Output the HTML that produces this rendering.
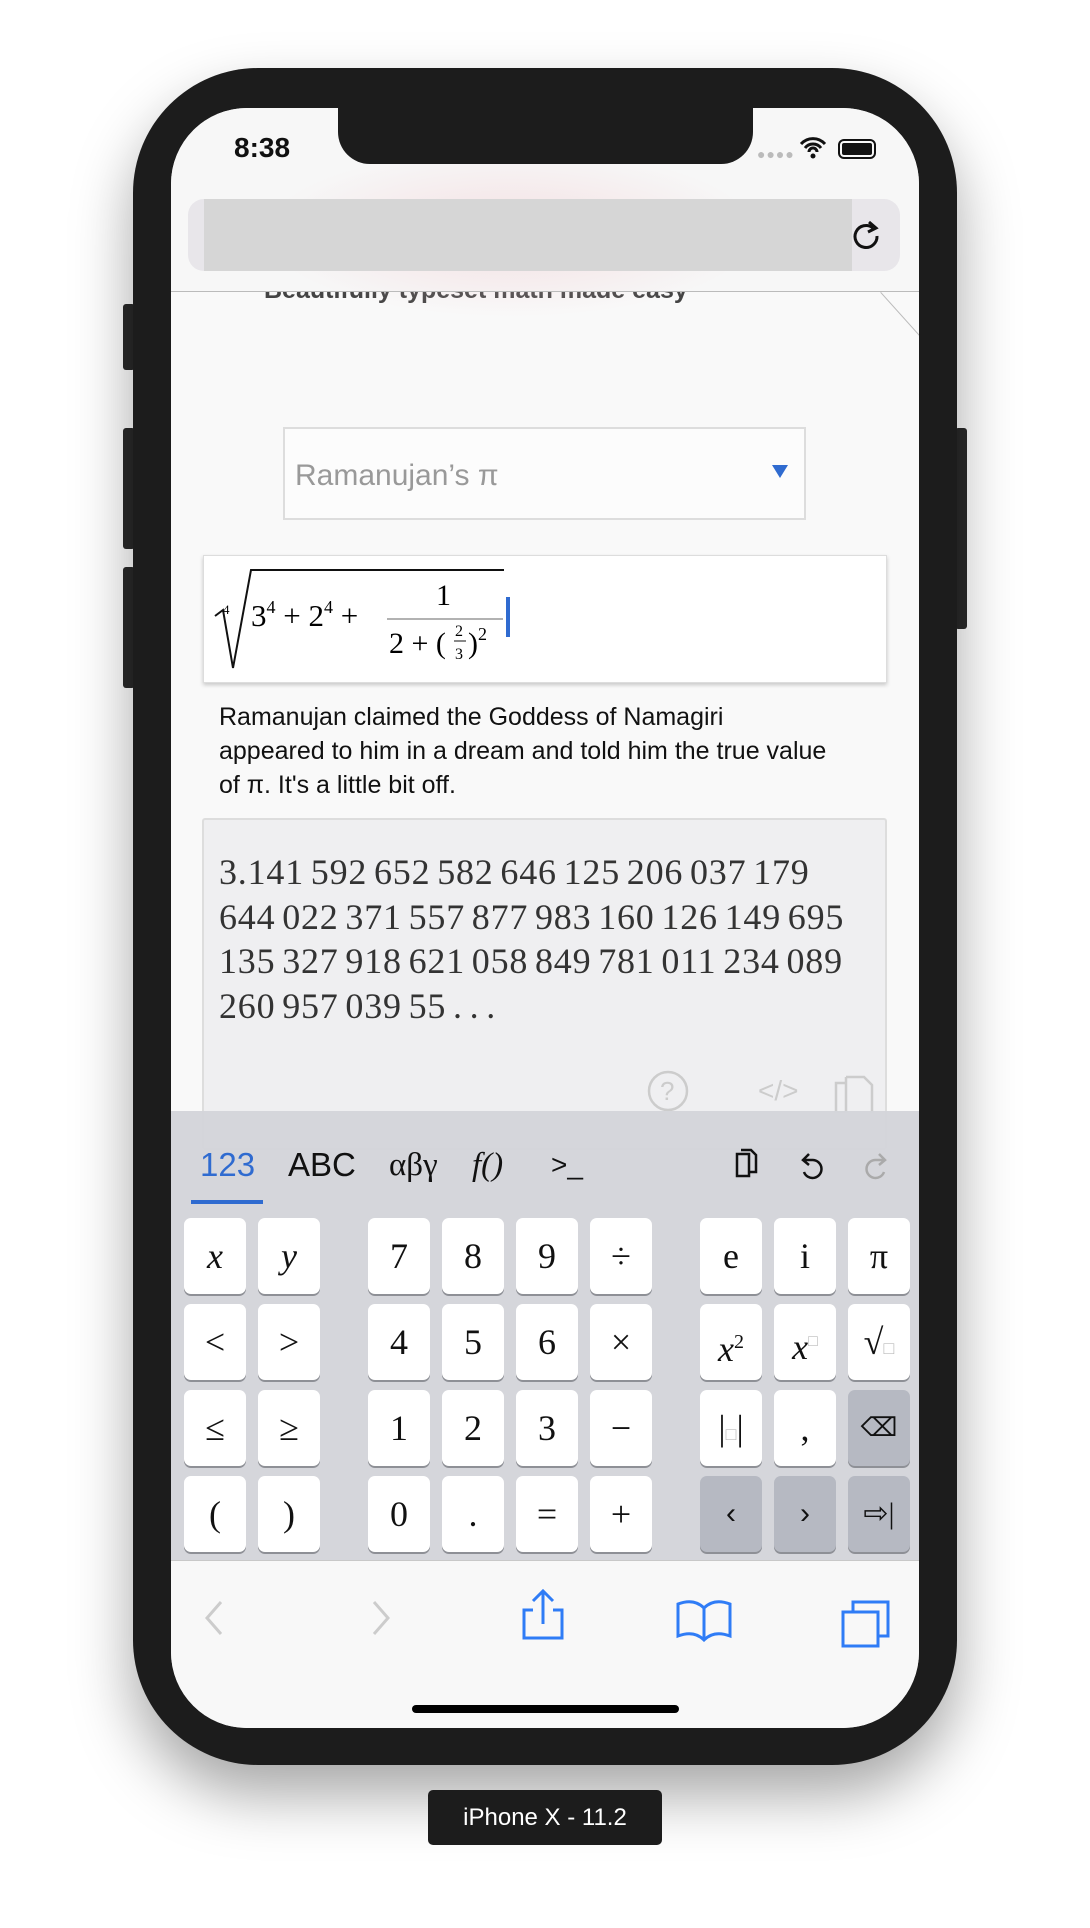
<!DOCTYPE html>
<html><head><meta charset="utf-8"><style>
*{margin:0;padding:0;box-sizing:border-box}
body{width:1090px;height:1928px;background:#fff;position:relative;overflow:hidden;font-family:"Liberation Sans",sans-serif}
.abs{position:absolute}
.phone{left:133px;top:68px;width:824px;height:1697px;background:#1c1c1c;border-radius:125px;box-shadow:0 30px 60px rgba(0,0,0,.35)}
.btn{background:#2a2a2a;border-radius:3px}
.screen{left:171px;top:108px;width:748px;height:1620px;background:#f9f9f9;border-radius:76px;overflow:hidden}
.key{position:absolute;width:62px;height:76px;background:#fff;border-radius:7px;box-shadow:0 2px 0 #8e9096;text-align:center;line-height:76px;font-family:"Liberation Serif",serif;font-size:36px;color:#111}
.dk{background:#b6b9c2}
.tab{position:absolute;top:1037px;font-size:33px;line-height:40px}
</style></head><body>
<div class="abs btn" style="left:123px;top:304px;width:12px;height:66px"></div>
<div class="abs btn" style="left:123px;top:428px;width:12px;height:121px"></div>
<div class="abs btn" style="left:123px;top:567px;width:12px;height:121px"></div>
<div class="abs btn" style="left:955px;top:428px;width:12px;height:201px"></div>
<div class="abs phone"></div>
<div class="abs screen">
 <div class="abs" style="left:93px;top:168px;font-weight:bold;font-size:25px;color:#444;white-space:nowrap">Beautifully typeset math made easy</div>
 <div class="abs" style="left:0;top:0;width:748px;height:184px;background:#f7f7f7"></div>
 <div class="abs" style="left:90px;top:40px;width:500px;height:170px;background:radial-gradient(ellipse at center,rgba(240,200,205,.5),rgba(255,255,255,0) 70%)"></div>
 <div class="abs" style="left:17px;top:91px;width:712px;height:72px;background:#e8e6ea;border-radius:16px"></div>
 <div class="abs" style="left:33px;top:91px;width:648px;height:72px;background:#d6d6d6"></div>
 <svg class="abs" style="left:678px;top:111px" width="34" height="34" viewBox="0 0 34 34"><path d="M24 9 A11 11 0 1 0 28 17" fill="none" stroke="#111" stroke-width="3"/><path d="M20 3 L27 9 L19 13" fill="none" stroke="#111" stroke-width="3"/></svg>
 <div class="abs" style="left:0;top:183px;width:748px;height:1px;background:#bbb"></div>
 <div class="abs" style="left:710px;top:184px;width:60px;height:1px;background:#bbb;transform:rotate(48deg);transform-origin:0 0"></div>
 <div class="abs" style="left:112px;top:319px;width:523px;height:93px;border:2px solid #ddd;background:#fcfcfc"></div>
 <div class="abs" style="left:124px;top:351px;font-size:30px;color:#999">Ramanujan’s π</div>
 <div class="abs" style="left:601px;top:357px;width:0;height:0;border-left:8px solid transparent;border-right:8px solid transparent;border-top:13px solid #2f6bd0"></div>
 <div class="abs" style="left:32px;top:447px;width:684px;height:128px;background:#fff;border:1px solid #ddd;box-shadow:0 2px 4px rgba(0,0,0,.2)"></div>
 <svg class="abs" style="left:0;top:440px" width="360" height="140"><path d="M44 68 L52 62 L62 120 L80 22 L333 22" fill="none" stroke="#111" stroke-width="2"/><text x="52" y="66" font-family="Liberation Serif" font-size="13">4</text><text x="80" y="78" font-family="Liberation Serif" font-size="31">3<tspan font-size="18" dy="-13">4</tspan><tspan dy="13"> + 2</tspan><tspan font-size="18" dy="-13">4</tspan><tspan dy="13"> +</tspan></text><text x="265" y="57" font-family="Liberation Serif" font-size="30">1</text><line x1="216" y1="71" x2="332" y2="71" stroke="#999" stroke-width="1.5"/><text x="218" y="105" font-family="Liberation Serif" font-size="30">2 + (</text><text x="284" y="88" font-family="Liberation Serif" font-size="16">2</text><text x="284" y="111" font-family="Liberation Serif" font-size="16">3</text><line x1="283" y1="93" x2="295" y2="93" stroke="#111"/><text x="297" y="105" font-family="Liberation Serif" font-size="30">)<tspan font-size="18" dy="-13">2</tspan></text></svg>
 <div class="abs" style="left:335px;top:489px;width:4px;height:40px;background:#2f6bd0"></div>
 <div class="abs" style="left:48px;top:592px;width:690px;font-size:25px;line-height:34px;color:#111;white-space:nowrap">Ramanujan claimed the Goddess of Namagiri<br>appeared to him in a dream and told him the true value<br>of π. It's a little bit off.</div>
 <div class="abs" style="left:31px;top:710px;width:685px;height:332px;background:#efeff1;border:2px solid #ddd;border-radius:3px"></div>
 <div class="abs" style="left:48px;top:742px;width:680px;font-family:'Liberation Serif',serif;font-size:36px;line-height:44.5px;color:#333;letter-spacing:0.8px;word-spacing:-3px;white-space:nowrap">3.141 592 652 582 646 125 206 037 179<br>644 022 371 557 877 983 160 126 149 695<br>135 327 918 621 058 849 781 011 234 089<br>260 957 039 55 . . .</div>
 <svg class="abs" style="left:475px;top:961px" width="250" height="44"><circle cx="22" cy="22" r="19" fill="none" stroke="#ccc" stroke-width="2.5"/><text x="14" y="31" font-size="26" fill="#ccc">?</text><text x="112" y="31" font-size="28" fill="#ccc">&lt;/&gt;</text><path d="M200 8 h18 l8 8 v28 M200 8 v36 h-10 v-30 h10" fill="none" stroke="#ccc" stroke-width="2.5"/></svg>
 <div class="abs" style="left:0;top:1003px;width:748px;height:449px;background:rgba(212,213,218,.97)"></div>
 <div class="tab" style="left:29px;color:#2f6bd0">123</div>
 <div class="tab" style="left:117px;color:#111">ABC</div>
 <div class="tab" style="left:218px;font-family:'Liberation Serif',serif;color:#111">αβγ</div>
 <div class="tab" style="left:301px;font-family:'Liberation Serif',serif;font-style:italic;color:#111">f()</div>
 <div class="tab" style="left:380px;font-size:28px;color:#111">&gt;_</div>
 <div class="abs" style="left:20px;top:1092px;width:72px;height:4px;background:#2f6bd0"></div>
 <svg class="abs" style="left:560px;top:1036px" width="170" height="40"><path d="M6 10 h12 v22 h-12 z M10 6 h10 l5 5 v17 h-7" fill="none" stroke="#111" stroke-width="2.5"/><path d="M78 10 l-6 6 6 5 M72 16 h10 a9 9 0 1 1 -9 12" fill="none" stroke="#111" stroke-width="2.5"/><path d="M148 10 l6 6 -6 5 M154 16 h-10 a9 9 0 1 0 9 12" fill="none" stroke="#aaa" stroke-width="2.5"/></svg>

 <div class="key" style="left:13px;top:1110px;font-style:italic">x</div>
 <div class="key" style="left:87px;top:1110px;font-style:italic">y</div>
 <div class="key" style="left:197px;top:1110px">7</div>
 <div class="key" style="left:271px;top:1110px">8</div>
 <div class="key" style="left:345px;top:1110px">9</div>
 <div class="key" style="left:419px;top:1110px">÷</div>
 <div class="key" style="left:529px;top:1110px">e</div>
 <div class="key" style="left:603px;top:1110px">i</div>
 <div class="key" style="left:677px;top:1110px">π</div>

 <div class="key" style="left:13px;top:1196px">&lt;</div>
 <div class="key" style="left:87px;top:1196px">&gt;</div>
 <div class="key" style="left:197px;top:1196px">4</div>
 <div class="key" style="left:271px;top:1196px">5</div>
 <div class="key" style="left:345px;top:1196px">6</div>
 <div class="key" style="left:419px;top:1196px">×</div>
 <div class="key" style="left:529px;top:1196px;font-style:italic">x<sup style="font-size:20px;font-style:normal">2</sup></div>
 <div class="key" style="left:603px;top:1196px;font-style:italic">x<sup style="font-size:16px;color:#bbb;font-style:normal">□</sup></div>
 <div class="key" style="left:677px;top:1196px">√<span style="font-size:18px;color:#bbb">□</span></div>

 <div class="key" style="left:13px;top:1282px">≤</div>
 <div class="key" style="left:87px;top:1282px">≥</div>
 <div class="key" style="left:197px;top:1282px">1</div>
 <div class="key" style="left:271px;top:1282px">2</div>
 <div class="key" style="left:345px;top:1282px">3</div>
 <div class="key" style="left:419px;top:1282px">−</div>
 <div class="key" style="left:529px;top:1282px">|<span style="font-size:18px;color:#bbb">□</span>|</div>
 <div class="key" style="left:603px;top:1282px">,</div>
 <div class="key dk" style="left:677px;top:1282px;font-size:26px">⌫</div>

 <div class="key" style="left:13px;top:1368px">(</div>
 <div class="key" style="left:87px;top:1368px">)</div>
 <div class="key" style="left:197px;top:1368px">0</div>
 <div class="key" style="left:271px;top:1368px">.</div>
 <div class="key" style="left:345px;top:1368px">=</div>
 <div class="key" style="left:419px;top:1368px">+</div>
 <div class="key dk" style="left:529px;top:1368px;font-family:'Liberation Sans';font-size:30px">‹</div>
 <div class="key dk" style="left:603px;top:1368px;font-family:'Liberation Sans';font-size:30px">›</div>
 <div class="key dk" style="left:677px;top:1368px;font-size:30px">⇨|</div>

 <div class="abs" style="left:0;top:1452px;width:748px;height:168px;background:#f8f8f8;border-top:1px solid #c8c8c8"></div>
 <svg class="abs" style="left:0;top:1476px" width="748" height="70"><path d="M50 18 l-14 16 14 16" fill="none" stroke="#ccc" stroke-width="3"/><path d="M203 18 l14 16 -14 16" fill="none" stroke="#ccc" stroke-width="3"/><path d="M362 26 h-9 v28 h38 v-28 h-9 M372 40 v-32 M362 17 l10 -10 10 10" fill="none" stroke="#2f7cf6" stroke-width="3"/><path d="M507 20 q16 -6 26 4 q10 -10 26 -4 v32 q-16 -6 -26 4 q-10 -10 -26 -4 z M533 24 v32" fill="none" stroke="#2f7cf6" stroke-width="3"/><path d="M672 28 h35 v34 h-35 z M682 28 v-10 h35 v34 h-10" fill="none" stroke="#2f7cf6" stroke-width="3"/></svg>
 <div class="abs" style="left:241px;top:1597px;width:267px;height:8px;background:#000;border-radius:4px"></div>
 <div class="abs" style="left:167px;top:0;width:415px;height:56px;background:#1c1c1c;border-radius:0 0 32px 32px"></div>
 <div class="abs" style="left:63px;top:24px;font-size:28px;font-weight:bold;color:#111">8:38</div>
 <div class="abs" style="left:586px;top:38px;font-size:14px;color:#bbb;letter-spacing:1px">●●●●</div>
 <svg class="abs" style="left:628px;top:28px" width="80" height="26"><path d="M2 8 a16 16 0 0 1 24 0 M6 12 a10 10 0 0 1 16 0 M10 16 a4 4 0 0 1 8 0" fill="none" stroke="#111" stroke-width="3"/><circle cx="14" cy="20" r="2.5" fill="#111"/><rect x="40" y="4" width="36" height="18" rx="5" fill="none" stroke="#111" stroke-width="2"/><rect x="43" y="7" width="30" height="12" rx="2" fill="#111"/></svg>
</div>
<div class="abs" style="left:428px;top:1790px;width:234px;height:55px;background:#1c1c1c;border-radius:5px;color:#fff;font-size:24px;text-align:center;line-height:55px">iPhone X - 11.2</div>
</body></html>
